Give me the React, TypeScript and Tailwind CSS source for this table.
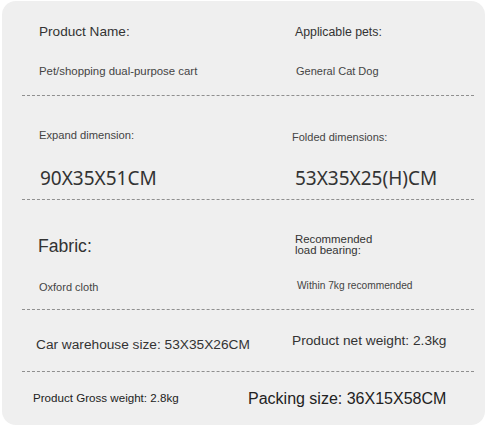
import React from 'react';

const sans = "font-['Liberation_Sans',Arial,sans-serif]";

const Row: React.FC<{ className?: string; dashed?: boolean; children: React.ReactNode }> = ({
  className = '',
  dashed = true,
  children,
}) => (
  <div
    className={`grid grid-cols-[226px_1fr] ${dashed ? 'border-b border-dashed border-[#8f8f8f]' : ''} ${className}`}
  >
    {children}
  </div>
);

export default function App() {
  return (
    <div className={`w-[488px] h-[427px] bg-white ${sans}`}>
      <div className="ml-[2px] pt-[1px]">
        <div className="w-[483px] h-[424px] rounded-[14px] bg-[#efefef] pl-[20px] pr-[11px] text-[#333]">
          {/* name / pets */}
          <Row className="h-[95px]">
            <div className="pl-[17px] pt-[23px]">
              <p className="text-[13.6px] leading-[16px]">Product Name:</p>
              <p className="mt-[24px] text-[11.4px] leading-[14px] text-[#444]">Pet/shopping dual-purpose cart</p>
            </div>
            <div className="pl-[47px] pt-[23px]">
              <p className="text-[12.3px] leading-[16px]">Applicable pets:</p>
              <p className="mt-[24px] pl-[1px] text-[11px] leading-[14px] text-[#444]">General Cat Dog</p>
            </div>
          </Row>

          {/* dimensions */}
          <Row className="h-[104px]">
            <div className="pl-[17px] pt-[32px]">
              <p className="text-[11.2px] leading-[14px] text-[#444]">Expand dimension:</p>
              <p className="mt-[25px] pl-[1px] font-['Noto_Sans',sans-serif] text-[19px] leading-[22px] text-[#333]">
                90X35X51CM
              </p>
            </div>
            <div className="pl-[44px] pt-[34px]">
              <p className="text-[11px] leading-[14px] text-[#444]">Folded dimensions:</p>
              <p className="mt-[23px] pl-[3px] font-['Noto_Sans',sans-serif] text-[19px] leading-[22px] text-[#333]">
                53X35X25(H)CM
              </p>
            </div>
          </Row>

          {/* fabric / load */}
          <Row className="h-[110px]">
            <div className="pl-[16px] pt-[36px]">
              <p className="text-[17.6px] leading-[20px]">Fabric:</p>
              <p className="mt-[24px] pl-[1px] text-[11px] leading-[14px] text-[#444]">Oxford cloth</p>
            </div>
            <div className="pl-[47px] pt-[34px]">
              <p className="text-[11.4px] leading-[10.5px]">
                Recommended
                <br />
                load bearing:
              </p>
              <p className="mt-[24px] pl-[2px] text-[10.2px] leading-[14px] text-[#444]">Within 7kg recommended</p>
            </div>
          </Row>

          {/* car / net */}
          <Row className="h-[62px]">
            <div className="pl-[14px] pt-[27px]">
              <p className="text-[13.7px] leading-[16px] whitespace-nowrap">Car warehouse size: 53X35X26CM</p>
            </div>
            <div className="pl-[44px] pt-[23px]">
              <p className="text-[13.7px] leading-[16px]">Product net weight: 2.3kg</p>
            </div>
          </Row>

          {/* gross / packing */}
          <Row className="h-[52px]" dashed={false}>
            <div className="pl-[11px] pt-[19px]">
              <p className="text-[11.6px] leading-[14px] text-[#222]">Product Gross weight: 2.8kg</p>
            </div>
            <div className="pt-[17px]">
              <p className="text-[16px] leading-[20px] text-[#222]">Packing size: 36X15X58CM</p>
            </div>
          </Row>
        </div>
      </div>
    </div>
  );
}
